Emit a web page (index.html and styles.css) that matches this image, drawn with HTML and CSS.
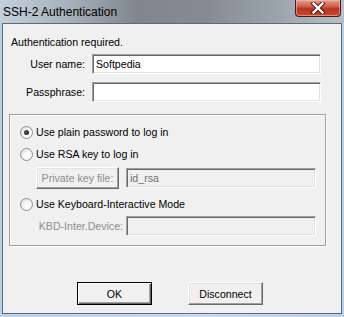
FILE: index.html
```html
<!DOCTYPE html>
<html lang="en">

<head>
  <meta charset="UTF-8" />
  <title>SSH-2 Authentication</title>
  <link rel="stylesheet" href="styles.css">
</head>

<body>
  <div class="window">
    <!-- Title bar -->
    <div class="titlebar">
      <span class="title">SSH-2 Authentication</span>
      <div class="close-btn">
        <svg width="16" height="12" viewBox="0 0 16 12">
          <path d="M3.5 1.5 L12.5 10.5 M12.5 1.5 L3.5 10.5" stroke="#4a1010" stroke-width="4.2" stroke-linecap="square" />
          <path d="M3.5 1.5 L12.5 10.5 M12.5 1.5 L3.5 10.5" stroke="#ffffff" stroke-width="2.4" stroke-linecap="square" />
        </svg>
      </div>
    </div>

    <!-- Dialog body -->
    <div class="client">
      <div class="intro">Authentication required.</div>

      <div class="field-row first">
        <label class="field-label">User name:</label>
        <input class="text-input" type="text" value="Softpedia" />
      </div>
      <div class="field-row">
        <label class="field-label">Passphrase:</label>
        <input class="text-input" type="password" />
      </div>

      <div class="group-box">
        <div class="radio-row row-plain">
          <span class="radio checked"></span>
          <span>Use plain password to log in</span>
        </div>
        <div class="radio-row row-rsa">
          <span class="radio"></span>
          <span>Use RSA key to log in</span>
        </div>
        <div class="sub-row row-key">
          <button class="win-btn disabled key-btn">Private key file:</button>
          <input class="text-input disabled key-input" type="text" value="id_rsa" />
        </div>
        <div class="radio-row row-kbd">
          <span class="radio"></span>
          <span>Use Keyboard-Interactive Mode</span>
        </div>
        <div class="sub-row row-device">
          <span class="device-label">KBD-Inter.Device:</span>
          <input class="text-input disabled key-input" type="text" />
        </div>
      </div>

      <div class="button-row">
        <button class="win-btn default">OK</button>
        <button class="win-btn">Disconnect</button>
      </div>
    </div>
  </div>
</body>

</html>
```

FILE: styles.css
```css
/* Reset */
* {
  margin: 0;
  padding: 0;
  box-sizing: border-box;
}

body {
  background: #bcd6ee;
  font-family: 'Liberation Sans', Arial, sans-serif;
  font-size: 10.6px;
  color: #000;
}

/* Window frame */
.window {
  width: 344px;
  height: 317px;
  display: flex;
  flex-direction: column;
  padding: 0 2px 3px;
  background: linear-gradient(90deg, #b9d3ea, #c4dcf1 60%, #b7d1ea);
}

.titlebar {
  height: 23px;
  margin: 0 -2px;
  display: flex;
  justify-content: space-between;
  align-items: flex-start;
  background: linear-gradient(90deg, #c3cfdb 0%, #aab4be 18%, #7f868e 40%, #858b92 60%, #9aa3ac 80%, #b6c0ca 100%);
}

.title {
  font-size: 12px;
  line-height: 16px;
  padding: 4px 0 0 3px;
  color: #000;
}

.close-btn {
  width: 46px;
  height: 17px;
  margin-right: 3px;
  border: 1px solid #4b1a1a;
  border-top: none;
  border-radius: 0 0 4px 4px;
  background: linear-gradient(#e0a090 0%, #d0604f 40%, #b8321f 55%, #c94a32 100%);
  box-shadow: inset 0 0 0 1px rgba(255, 200, 190, 0.5);
  display: flex;
  justify-content: center;
  align-items: center;
}

/* Client area */
.client {
  flex: 1;
  background: #f0f0f0;
  border: 1px solid #5f6a76;
  display: flex;
  flex-direction: column;
}

.intro {
  line-height: 13px;
  margin: 12px 0 0 8px;
}

.field-row {
  display: flex;
  align-items: center;
  margin-top: 8px;
}

.field-row.first {
  margin-top: 5px;
}

.field-label {
  width: 82px;
  text-align: right;
}

.text-input {
  width: 229px;
  height: 20px;
  margin-left: 7px;
  padding: 0 3px;
  font: inherit;
  color: #000;
  background: #fff;
  border: 1px solid;
  border-color: #a0a0a0 #ffffff #ffffff #a0a0a0;
  box-shadow: inset 1px 1px 0 #696969, inset -1px -1px 0 #e3e3e3;
  outline: none;
}

.text-input.disabled {
  background: #f0f0f0;
  color: #6d6d6d;
}

/* Group box */
.group-box {
  width: 317px;
  height: 132px;
  margin: 12px 0 0 6px;
  border: 1px solid #a0a0a0;
  box-shadow: inset 1px 1px 0 #fff, 1px 1px 0 #fff;
  display: flex;
  flex-direction: column;
  padding-top: 7px;
}

.radio-row {
  height: 20px;
  display: flex;
  align-items: center;
  gap: 3px;
  padding-left: 10px;
}

.row-rsa {
  margin-top: 2px;
}

.row-kbd {
  margin-top: 5px;
}

.radio {
  width: 13px;
  height: 13px;
  border-radius: 50%;
  border: 1px solid #8e8f8f;
  background: radial-gradient(circle at 60% 65%, #ffffff 0%, #f4f4f4 45%, #d8d8d8 100%);
  position: relative;
}

.radio.checked::after {
  content: '';
  position: absolute;
  left: 3px;
  top: 3px;
  width: 5px;
  height: 5px;
  border-radius: 50%;
  background: radial-gradient(circle at 40% 40%, #555, #111);
}

.sub-row {
  display: flex;
  align-items: center;
  padding-left: 26px;
}

.row-key {
  margin-top: 3px;
  height: 22px;
}

.row-device {
  margin-top: 1px;
  height: 21px;
}

.key-btn {
  width: 83px;
  height: 22px;
}

.key-input {
  width: 190px;
  height: 20px;
  margin-left: 7px;
}

.device-label {
  width: 87px;
  text-align: right;
  color: #8d8d8d;
}

.row-device .key-input {
  margin-left: 3px;
}

/* Buttons */
.win-btn {
  font: inherit;
  color: #000;
  background: #f0f0f0;
  border: 1px solid;
  border-color: #ffffff #696969 #696969 #ffffff;
  box-shadow: inset -1px -1px 0 #a0a0a0, inset 1px 1px 0 #e3e3e3;
}

.win-btn.disabled {
  color: #8d8d8d;
}

.button-row {
  display: flex;
  gap: 36px;
  margin: 36px 0 0 74px;
}

.button-row .win-btn {
  width: 75px;
  height: 23px;
}

.win-btn.default {
  border: 1px solid #000;
  box-shadow: inset 1px 1px 0 #fff, inset -1px -1px 0 #696969, inset -2px -2px 0 #a0a0a0;
}
```
